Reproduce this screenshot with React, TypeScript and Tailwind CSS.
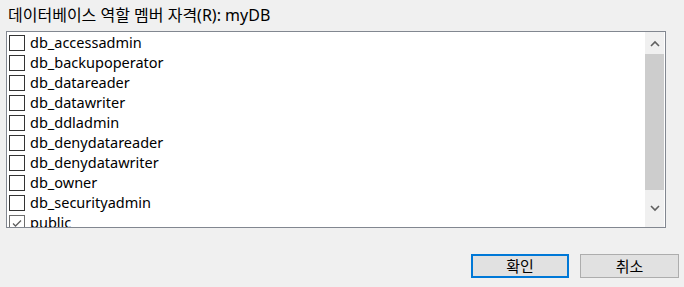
import * as React from 'react';

const roles: { name: string; checked: boolean }[] = [
  { name: 'db_accessadmin', checked: false },
  { name: 'db_backupoperator', checked: false },
  { name: 'db_datareader', checked: false },
  { name: 'db_datawriter', checked: false },
  { name: 'db_ddladmin', checked: false },
  { name: 'db_denydatareader', checked: false },
  { name: 'db_denydatawriter', checked: false },
  { name: 'db_owner', checked: false },
  { name: 'db_securityadmin', checked: false },
  { name: 'public', checked: true },
];

const font = { fontFamily: '"Noto Sans", "Noto Sans CJK KR", sans-serif' };

function CheckBox({ checked }: { checked: boolean }) {
  return (
    <span
      className={`w-4 h-4 shrink-0 border bg-white flex items-center justify-center ${
        checked ? 'border-[#6d6d6d]' : 'border-[#333333]'
      }`}
    >
      {checked && (
        <svg width="12" height="12" viewBox="0 0 12 12">
          <path d="M2 6.5 L4.5 9 L10 3.5" fill="none" stroke="#5f5f5f" strokeWidth="1.3" />
        </svg>
      )}
    </span>
  );
}

function ScrollBar() {
  return (
    <div className="w-[19px] shrink-0 bg-[#f0f0f0] flex flex-col mr-px">
      <div className="h-[22px] flex items-center justify-center">
        <svg width="10" height="7" viewBox="0 0 10 7">
          <path d="M1 6 L5 2 L9 6" fill="none" stroke="#606060" strokeWidth="1.6" />
        </svg>
      </div>
      <div className="h-[136px] bg-[#cdcdcd]" />
      <div className="flex-1 flex items-center justify-center">
        <svg width="10" height="7" viewBox="0 0 10 7">
          <path d="M1 1 L5 5 L9 1" fill="none" stroke="#606060" strokeWidth="1.6" />
        </svg>
      </div>
    </div>
  );
}

export default function App() {
  return (
    <div className="w-[684px] h-[287px] bg-[#f0f0f0] text-black overflow-hidden" style={font}>
      <div className="pl-[8px] pt-[5px] h-[31px] text-[16px] leading-[20px]">
        데이터베이스 역할 멤버 자격(R): myDB
      </div>
      <div className="ml-[6px] w-[660px] h-[197px] border border-[#828790] bg-white flex">
        <div className="flex-1 overflow-hidden pt-[1px]">
          {roles.map((r) => (
            <div key={r.name} className="h-[20px] flex items-center pl-[2px] gap-[5px] text-[14.5px]">
              <CheckBox checked={r.checked} />
              <span className="leading-[20px] pb-[3px]">{r.name}</span>
            </div>
          ))}
        </div>
        <ScrollBar />
      </div>
      <div className="flex justify-end gap-[11px] pr-[5px] pt-[26px]">
        <button className="w-[98px] h-[24px] bg-[#e1e1e1] border-2 border-[#0078d7] text-[15px] leading-none">
          확인
        </button>
        <button className="w-[99px] h-[24px] bg-[#e1e1e1] border border-[#adadad] text-[15px] leading-none">
          취소
        </button>
      </div>
    </div>
  );
}
